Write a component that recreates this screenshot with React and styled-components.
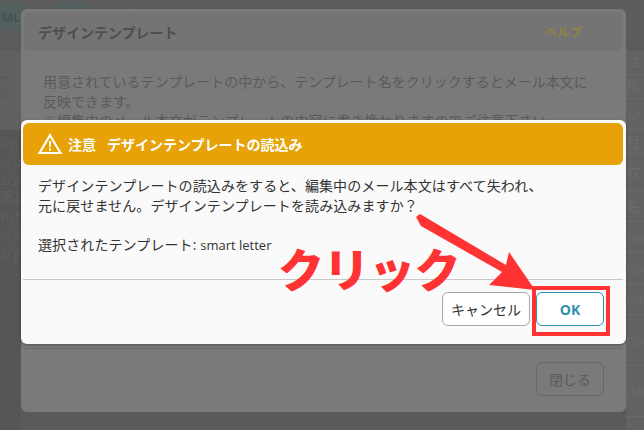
import React from "react";
import styled, { createGlobalStyle } from "styled-components";

const GlobalStyle = createGlobalStyle`
  html, body {
    margin: 0;
    padding: 0;
    background: #5a5a5a;
    font-family: "Open Sans", "Noto Sans CJK JP", sans-serif;
  }
`;

const Page = styled.div`
  position: relative;
  width: 644px;
  height: 430px;
  overflow: hidden;
  background: #5a5a5a;
`;

/* dimmed page behind the dialogs */
const BackPage = styled.div`
  display: grid;
  grid-template-columns: 21px 1fr 18px;
  grid-template-rows: 50px 80px 1fr;
  height: 100%;
`;

const TopBar = styled.div`
  grid-column: 1 / -1;
  display: flex;
  gap: 27px;
  padding-top: 3px;
  height: 47px;
  box-sizing: border-box;
  background: #5c5c5c;
`;

const TopTab = styled.div`
  width: ${(props) => props.width}px;
  height: 27px;
  padding-top: 2px;
  box-sizing: border-box;
  border-radius: 6px;
  background: #52605f;
  color: #485357;
  font-size: 12px;
  font-weight: 700;
  line-height: 25px;
  text-indent: -5px;
  white-space: nowrap;
  overflow: hidden;
`;

const TopPill = styled.div`
  display: flex;
  width: 82px;
  height: 27px;
  box-sizing: border-box;
  border-right: 1px solid #686868;
  border-radius: 6px;
`;

const SideBlock = styled.div`
  grid-column: 1;
  background: #606060;
  color: #565656;
  font-size: 12px;
  padding-top: 18px;
`;

const SideList = styled.div`
  grid-column: 1;
  background: #565656;
  color: #5e5e5e;
  font-size: 15px;
  line-height: 18px;
  padding-top: 4px;
  text-indent: -3px;
  overflow: hidden;
  white-space: nowrap;
`;

const RightList = styled.div`
  grid-column: 3;
  grid-row: 2 / 4;
  display: flex;
  flex-direction: column;
  background: #626262;
  color: #6b6b6b;
  font-size: 14px;
  overflow: hidden;
  white-space: nowrap;
`;

const RightRow = styled.div`
  height: ${(props) => props.height}px;
  line-height: ${(props) => props.height}px;
  border-bottom: 1px solid #6a6a6a;
  flex-shrink: 0;
`;

const TemplateModal = styled.div`
  position: absolute;
  left: 21px;
  top: 9px;
  width: 605px;
  height: 403px;
  box-sizing: border-box;
  padding: 3px;
  display: flex;
  flex-direction: column;
  border-radius: 6px;
  background: #7a7a7a;
`;

const TemplateHead = styled.div`
  display: flex;
  justify-content: space-between;
  align-items: center;
  height: 39px;
  flex-shrink: 0;
  padding: 0 41px 0 14px;
  border-radius: 6px;
  background: #747474;
  color: #4e4e4e;
  font-size: 14px;
  font-weight: 700;
`;

const HelpLink = styled.span`
  color: #8f8347;
  font-size: 12.5px;
`;

const TemplateBody = styled.div`
  flex: 1;
  padding: 21px 0 0 19px;
  color: #5a5a5a;
  font-size: 14px;
  line-height: 19.6px;
  white-space: nowrap;
`;

const TemplateFoot = styled.div`
  display: flex;
  justify-content: flex-end;
  padding: 13px 19px 13px 0;
  border-top: 1px solid #6a6a6a;
`;

const CloseButton = styled.div`
  width: 68px;
  height: 34px;
  box-sizing: border-box;
  display: flex;
  align-items: center;
  justify-content: center;
  border: 1px solid #666;
  border-radius: 6px;
  color: #5a5a5a;
  font-size: 14px;
`;

const AlertModal = styled.div`
  position: absolute;
  left: 21px;
  top: 120px;
  width: 605px;
  height: 224px;
  box-sizing: border-box;
  padding: 3px 3px 0 2px;
  display: flex;
  flex-direction: column;
  border-radius: 6px;
  background: #fafafa;
  box-shadow: 0 1px 3px rgba(0, 0, 0, 0.35);
`;

const AlertHead = styled.div`
  display: flex;
  align-items: center;
  gap: 6px;
  height: 42px;
  flex-shrink: 0;
  padding-left: 15px;
  border-radius: 6px;
  background: #e6a206;
  color: #fff;
  font-size: 14px;
  font-weight: 700;
`;

const AlertNotice = styled.span`
  margin-right: 5px;
`;

const AlertBody = styled.div`
  height: 115px;
  flex-shrink: 0;
  box-sizing: border-box;
  padding: 11px 0 0 15px;
  border-bottom: 1px solid #c8c8c8;
  color: #333;
  font-size: 14px;
  line-height: 19.8px;
  letter-spacing: 0.1px;
`;

const AlertLine = styled.div`
  min-height: 19.8px;
`;

const TemplateName = styled.span`
  font-size: 13px;
  letter-spacing: 0;
`;

const AlertFoot = styled.div`
  display: flex;
  justify-content: flex-end;
  gap: 6px;
  padding: 12px 19px 0 0;
`;

const DialogButton = styled.button`
  width: ${(props) => (props.$primary ? 68 : 88)}px;
  height: 34px;
  padding: 0;
  border: 1px solid ${(props) => (props.$primary ? "#2e8fb5" : "#a8a8a8")};
  border-radius: 6px;
  background: #fff;
  color: ${(props) => (props.$primary ? "#2e8fb5" : "#333")};
  font-family: inherit;
  font-size: 14px;
  font-weight: ${(props) => (props.$primary ? 700 : 400)};
`;

const ClickLabel = styled.div`
  position: absolute;
  left: 278px;
  top: 232px;
  color: #ff3333;
  font-family: "Noto Sans CJK JP", sans-serif;
  font-size: 46px;
  font-weight: 900;
  line-height: 70px;
  letter-spacing: -0.5px;
  white-space: nowrap;
`;

const HighlightBox = styled.div`
  position: absolute;
  left: 532px;
  top: 286px;
  width: 78px;
  height: 50px;
  box-sizing: border-box;
  border: 4px solid #ff3333;
`;

const ArrowMark = styled.svg`
  position: absolute;
  left: 410px;
  top: 210px;
  width: 130px;
  height: 85px;
`;

const WarningIcon = () => (
  <svg width="24" height="22" viewBox="0 0 24 22" fill="none">
    <path d="M12 2.2 L22.5 20 H1.5 Z" stroke="#fff" strokeWidth="2.2" strokeLinejoin="miter" />
    <path d="M10.8 8 H13.2 L12.7 14.6 H11.3 Z" fill="#fff" />
    <rect x="11" y="15.6" width="2" height="2" fill="#fff" />
  </svg>
);

const App = () => {
  return (
    <Page>
      <GlobalStyle />
      <BackPage>
        <TopBar>
          <TopTab width={26}>TML</TopTab>
          <TopPill>
            <TopTab width={35}></TopTab>
          </TopPill>
        </TopBar>
        <SideBlock>— 0</SideBlock>
        <RightList>
          <RightRow height={24}>コ</RightRow>
          <RightRow height={23}>換</RightRow>
          <RightRow height={30}>ジ</RightRow>
          <RightRow height={23}>目</RightRow>
          <RightRow height={36}>紋</RightRow>
          <RightRow height={30}>名</RightRow>
          <RightRow height={30}>nar</RightRow>
          <RightRow height={30}>nar</RightRow>
          <RightRow height={30}>nar</RightRow>
          <RightRow height={50}>nar</RightRow>
          <RightRow height={50}>nar</RightRow>
        </RightList>
        <SideList>
          s/p<br />s/p<br />s/p<br />案内<br />tur<br />s/p<br />s/p
        </SideList>
      </BackPage>

      <TemplateModal>
        <TemplateHead>
          デザインテンプレート
          <HelpLink>ヘルプ</HelpLink>
        </TemplateHead>
        <TemplateBody>
          用意されているテンプレートの中から、テンプレート名をクリックするとメール本文に
          <br />
          反映できます。
          <br />
          ※編集中のメール本文がテンプレートの内容に書き換わりますのでご注意下さい
        </TemplateBody>
        <TemplateFoot>
          <CloseButton>閉じる</CloseButton>
        </TemplateFoot>
      </TemplateModal>

      <AlertModal>
        <AlertHead>
          <WarningIcon />
          <AlertNotice>注意</AlertNotice>
          デザインテンプレートの読込み
        </AlertHead>
        <AlertBody>
          <AlertLine>デザインテンプレートの読込みをすると、編集中のメール本文はすべて失われ、</AlertLine>
          <AlertLine>元に戻せません。デザインテンプレートを読み込みますか？</AlertLine>
          <AlertLine />
          <AlertLine>選択されたテンプレート: <TemplateName>smart letter</TemplateName></AlertLine>
        </AlertBody>
        <AlertFoot>
          <DialogButton>キャンセル</DialogButton>
          <DialogButton $primary>OK</DialogButton>
        </AlertFoot>
      </AlertModal>

      <ClickLabel>クリック</ClickLabel>
      <HighlightBox />
      <ArrowMark viewBox="410 210 130 85">
        <path d="M416 217 L421 226 L502 272 L489 285 L535 290 L509 252 L506 265 L420 214 Z" fill="#ff3333" />
      </ArrowMark>
    </Page>
  );
};

export default App;
